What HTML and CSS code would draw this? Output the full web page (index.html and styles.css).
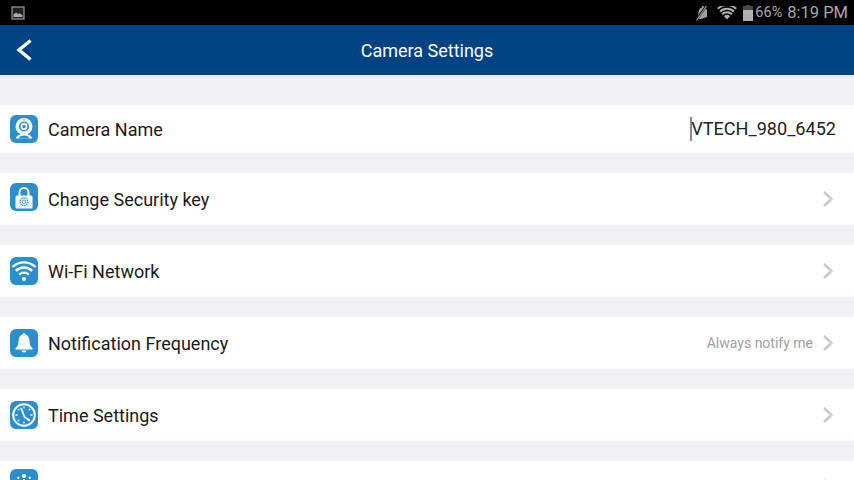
FILE: index.html
```html
<!DOCTYPE html>
<html lang="en">
<head>
<meta charset="utf-8">
<title>Camera Settings</title>
<link rel="stylesheet" href="styles.css">
</head>
<body>
<div class="screen">
  <div class="status">
    <svg class="pic" width="14" height="14" viewBox="0 0 14 14"><rect x="1" y="1" width="12" height="12" fill="#222" stroke="#999" stroke-width="1.2"/><path d="M2.500 11V8.500L5 6.500l2 1.500 1.500-.8 3 2V11z" fill="#aaa"/></svg>
    <div class="status-right">
      <svg class="mute" width="14" height="16" viewBox="0 0 14 16"><path d="M1.500 12.500c1.500-1.500 2-3.500 2-5.500 0-2.500 1.700-4 3.500-4.500V1l2 .3V2.800l3 1.700v7.500l-6 2H1.500z" fill="#a0a0a0"/><path d="M1 15.500 12 0" stroke="#000" stroke-width="2.200"/><path d="M1.500 15.500 11.500 1" stroke="#a0a0a0" stroke-width="1.200"/></svg>
      <svg class="wifi" width="20" height="14" viewBox="0 0 20 14"><path d="M10 13.500 7 10.200a4.300 4.300 0 0 1 6 0z" fill="#b0b0b0"/><path d="M5.200 8.200a6.800 6.800 0 0 1 9.600 0M3 5.500a10 10 0 0 1 14 0M.8 2.800a13.300 13.300 0 0 1 18.400 0" fill="none" stroke="#b0b0b0" stroke-width="2"/></svg>
      <svg class="batt" width="10" height="16" viewBox="0 0 10 16"><path d="M3 0h4v1.500h3V16H0V1.500h3z" fill="#b0b0b0"/><path d="M3 0h4v1.500h3V5H0V1.500h3z" fill="#4a4a4a"/></svg>
      <span class="pct">66%</span>
      <span class="clock">8:19 PM</span>
    </div>
  </div>
  <header class="nav">
    <svg class="back" width="18" height="22" viewBox="0 0 18 22"><path d="M15.500 1.500 4 11l11.500 9.500" fill="none" stroke="#fff" stroke-width="3.400"/></svg>
    <h1 class="title">Camera Settings</h1>
  </header>
  <main class="list">
    <div class="row row-name">
      <span class="icon"><svg viewBox="0 0 28 28" width="28" height="28"><circle cx="14" cy="11.500" r="8.500" fill="#fff"/><circle cx="14" cy="11.500" r="5" fill="#2a8fd0"/><circle cx="14" cy="11.500" r="3.400" fill="#fff"/><circle cx="14" cy="11.500" r="1.700" fill="#2a8fd0"/><circle cx="14" cy="4.800" r=".8" fill="#2a8fd0"/><path d="M6 23.500c.5-3 3-4.500 8-4.500s7.500 1.500 8 4.500z" fill="#fff"/><path d="M9 23.500c0-1.800 2-3 5-3s5 1.200 5 3z" fill="#2a8fd0"/></svg></span>
      <span class="label">Camera Name</span>
      <span class="value"><i class="caret"></i>VTECH_980_6452</span>
    </div>
    <div class="row">
      <span class="icon icon-raised"><svg viewBox="0 0 28 28" width="28" height="28"><path d="M9.500 13.500V9.500a4.500 4.500 0 0 1 9 0V13.500" fill="none" stroke="#fff" stroke-width="2"/><rect x="5.500" y="12.500" width="17" height="13" rx="1.500" fill="#fff"/><circle cx="14" cy="18.800" r="3.800" fill="none" stroke="#2a8fd0" stroke-width="1.400" stroke-dasharray="1.400 .7"/><circle cx="14" cy="18.800" r="1.800" fill="none" stroke="#2a8fd0" stroke-width=".9"/></svg></span>
      <span class="label">Change Security key</span>
      <svg class="chev" width="12" height="18" viewBox="0 0 12 18"><path d="M2 2l7.500 7L2 16" fill="none" stroke="#c7c7cc" stroke-width="2.400"/></svg>
    </div>
    <div class="row">
      <span class="icon"><svg viewBox="0 0 28 28" width="28" height="28"><circle cx="14" cy="22" r="2" fill="#fff"/><path d="M9.200 17.500a7 7 0 0 1 9.600 0M5.800 13.800a11.800 11.800 0 0 1 16.400 0M2.500 10a16.500 16.500 0 0 1 23 0" fill="none" stroke="#fff" stroke-width="2.400"/></svg></span>
      <span class="label">Wi-Fi Network</span>
      <svg class="chev" width="12" height="18" viewBox="0 0 12 18"><path d="M2 2l7.500 7L2 16" fill="none" stroke="#c7c7cc" stroke-width="2.400"/></svg>
    </div>
    <div class="row">
      <span class="icon"><svg viewBox="0 0 28 28" width="28" height="28"><circle cx="14" cy="5.500" r="1.500" fill="#fff"/><path d="M14 5.500c-3.500 0-5.500 2.700-5.500 6.500 0 3.500-1 5.500-3 7v1.500h17V19c-2-1.500-3-3.500-3-7 0-3.800-2-6.500-5.500-6.500z" fill="#fff"/><path d="M11.500 21.500a2.500 2 0 0 0 5 0z" fill="#fff"/></svg></span>
      <span class="label">Notification Frequency</span>
      <span class="hint">Always notify me</span>
      <svg class="chev" width="12" height="18" viewBox="0 0 12 18"><path d="M2 2l7.500 7L2 16" fill="none" stroke="#c7c7cc" stroke-width="2.400"/></svg>
    </div>
    <div class="row">
      <span class="icon"><svg viewBox="0 0 28 28" width="28" height="28"><circle cx="14" cy="14" r="10.800" fill="none" stroke="#fff" stroke-width="2"/><path d="M14 5.500V7.500M14 20.500v2M5.500 14h2M20.500 14h2M8 8l1.200 1.200M18.800 18.800 20 20M20 8l-1.200 1.200M8 20l1.200-1.200" stroke="#fff" stroke-width="1.300"/><path d="M11 7 14.500 16l5 3.500" fill="none" stroke="#fff" stroke-width="1.800"/></svg></span>
      <span class="label">Time Settings</span>
      <svg class="chev" width="12" height="18" viewBox="0 0 12 18"><path d="M2 2l7.500 7L2 16" fill="none" stroke="#c7c7cc" stroke-width="2.400"/></svg>
    </div>
    <div class="row">
      <span class="icon icon-top"><svg viewBox="0 0 28 28" width="28" height="28"><circle cx="14" cy="7" r="2" fill="#fff"/><path d="M7.500 9.500 9 8M20.500 9.500 19 8M14 10v8" fill="none" stroke="#fff" stroke-width="2"/></svg></span>
      <span class="label"></span>
      <svg class="chev" width="12" height="18" viewBox="0 0 12 18"><path d="M2 2l7.500 7L2 16" fill="none" stroke="#c7c7cc" stroke-width="2.400"/></svg>
    </div>
  </main>
</div>
</body>
</html>
```
FILE: styles.css
```css
* { box-sizing: border-box; }
html, body { margin: 0; padding: 0; }
body { background: #efeff4; font-family: Roboto, "Liberation Sans", sans-serif; }
.screen { width: 854px; height: 480px; overflow: hidden; display: flex; flex-direction: column; }
.status { height: 25px; flex: none; background: #000; display: flex; align-items: center; justify-content: space-between; padding: 0 6px 0 11px; color: #a8a8a8; }
.pic { display: block; }
.status-right { display: flex; align-items: center; }
.mute { margin-right: 8px; }
.wifi { margin-right: 6px; }
.batt { margin-right: 2px; }
.pct { font-size: 14.500px; margin-right: 5px; }
.clock { font-size: 16.500px; }
.nav { height: 50px; flex: none; background: #004385; display: flex; align-items: center; justify-content: center; position: relative; }
.back { position: absolute; left: 15px; top: 14px; }
.title { margin: 0; color: #fff; font-size: 18px; font-weight: 400; }
.list { display: flex; flex-direction: column; padding-top: 30px; gap: 20px; }
.row { height: 52px; flex: none; background: #fff; display: flex; align-items: center; padding: 0 20px 0 10px; }
.row-name { height: 48px; padding-right: 18px; }
.icon { width: 28px; height: 28px; flex: none; background: #2a8fd0; border-radius: 6px; margin-right: 10px; display: block; }
.icon-raised { margin-bottom: 4px; }
.icon-top { margin-bottom: 8px; }
.icon svg { display: block; }
.label { flex: 1; font-size: 18px; color: #1a1a1a; padding-top: 1px; }
.value { font-size: 18.100px; color: #222; display: flex; align-items: center; padding-bottom: 1px; }
.caret { width: 2px; height: 24px; background: #888; margin-right: -1px; display: block; }
.hint { font-size: 14px; color: #a0a0a5; margin-right: 9px; }
.chev { display: block; }
```
